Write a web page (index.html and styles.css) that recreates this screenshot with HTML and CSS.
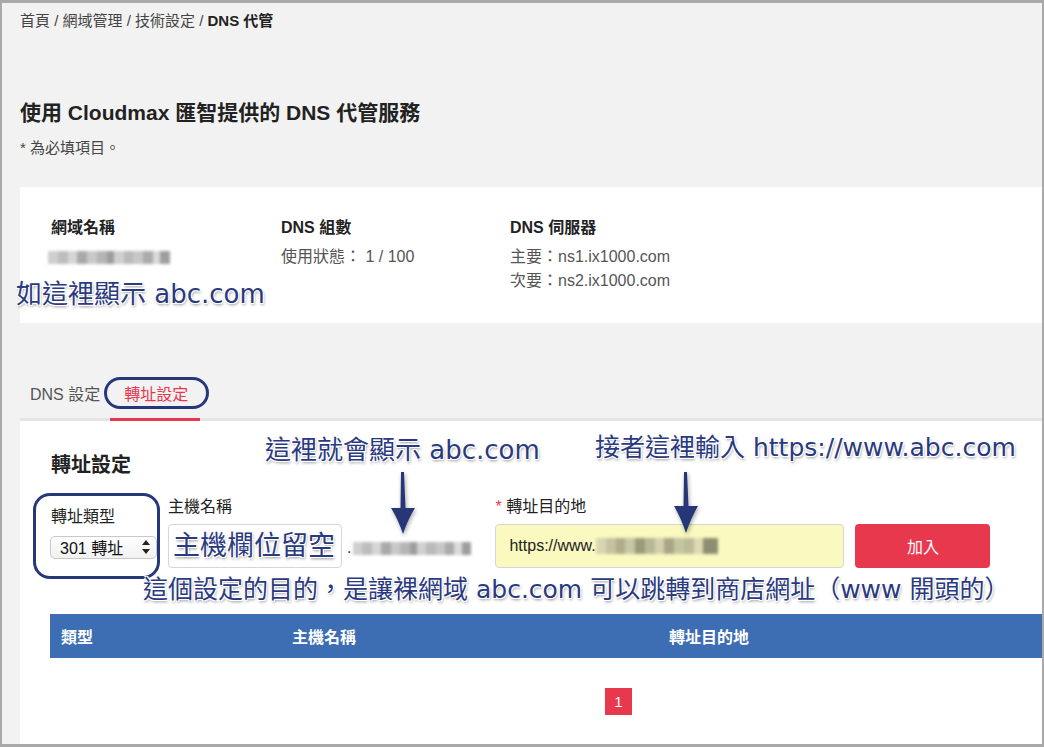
FILE: index.html
```html
<!DOCTYPE html>
<html lang="zh-Hant">
<head>
    <meta charset="UTF-8">
    <title>DNS 代管</title>
    <link rel="stylesheet" href="styles.css">
</head>
<body>
<div class="frame">
    <div class="page">
        <div class="breadcrumb">首頁 / 網域管理 / 技術設定 / <b>DNS 代管</b></div>
        <h1>使用 Cloudmax 匯智提供的 DNS 代管服務</h1>
        <p class="required">* 為必填項目。</p>

        <section class="panel info">
            <div class="info-col">
                <div class="info-label">網域名稱</div>
                <div class="info-value"><span class="blur blur-domain"></span></div>
            </div>
            <div class="info-col">
                <div class="info-label">DNS 組數</div>
                <div class="info-value">使用狀態： 1 / 100</div>
            </div>
            <div class="info-col">
                <div class="info-label">DNS 伺服器</div>
                <div class="info-value">主要：ns1.ix1000.com</div>
                <div class="info-value">次要：ns2.ix1000.com</div>
            </div>
            <div class="note note-domain">如這裡顯示 abc.com</div>
        </section>

        <nav class="tabs">
            <div class="tab">DNS 設定</div>
            <div class="tab active">轉址設定</div>
        </nav>

        <section class="panel redirect">
            <h2>轉址設定</h2>

            <div class="form-row">
                <div class="type-group">
                    <div class="field-label">轉址類型</div>
                    <div class="select">
                        <span>301 轉址</span>
                        <svg class="select-arrows" width="8" height="14" viewBox="0 0 8 14">
                            <path d="M4 0 L8 5 L0 5 Z M0 9 L8 9 L4 14 Z" fill="#222"/>
                        </svg>
                    </div>
                </div>
                <div class="host-group">
                    <div class="field-label">主機名稱</div>
                    <div class="host-line">
                        <div class="text-input host-input"><span class="note note-input">主機欄位留空</span></div>
                        <span class="suffix">.<span class="blur blur-host"></span></span>
                    </div>
                </div>
                <div class="dest-group">
                    <div class="field-label"><span class="star">*</span> 轉址目的地</div>
                    <div class="text-input dest-input">https://www.<span class="blur blur-dest"></span></div>
                </div>
                <button class="add-button">加入</button>
            </div>

            <div class="thead">
                <div>類型</div>
                <div>主機名稱</div>
                <div>轉址目的地</div>
            </div>

            <div class="pager"><span class="page-num">1</span></div>

            <!-- annotations over the form -->
            <div class="note note-host">這裡就會顯示 abc.com</div>
            <div class="note note-dest">接者這裡輸入 https://www.abc.com</div>
            <div class="note note-purpose">這個設定的目的，是讓裸網域 abc.com 可以跳轉到商店網址（www 開頭的）</div>
            <svg class="arrow arrow-host" width="26" height="63" viewBox="0 0 26 63">
                <path d="M11 0 L14 0 L15.5 36 L25 36 Q18 47 13 62 Q8 47 1 36 L10.5 36 Z" fill="#263778"/>
            </svg>
            <svg class="arrow arrow-dest" width="26" height="63" viewBox="0 0 26 63">
                <path d="M11 0 L14 0 L15.5 34 L25 34 Q18 46 13 61 Q8 46 1 34 L10.5 34 Z" fill="#263778"/>
            </svg>
        </section>
    </div>
</div>
</body>
</html>
```

FILE: styles.css
```css
body {
    margin: 0;
    font-family: "Liberation Sans", "Noto Sans CJK TC", sans-serif;
    color: #333;
}

.frame {
    width: 1044px;
    height: 747px;
    box-sizing: border-box;
    border-style: solid;
    border-color: #a9a9a9;
    border-width: 3px 2px 3px 2px;
    background: #f2f2f2;
    overflow: hidden;
}

.page {
    width: 1197px;
    padding: 8px 0 0 18px;
}

.breadcrumb {
    font-size: 15px;
    line-height: 20px;
    color: #444;
}
.breadcrumb b {
    color: #222;
}

h1 {
    margin: 69px 0 0;
    font-size: 21px;
    line-height: 26px;
    color: #222;
}

.required {
    margin: 12px 0 0;
    font-size: 15px;
    line-height: 20px;
    color: #444;
}

.panel {
    position: relative;
    background: #fff;
    padding-left: 31px;
    padding-right: 31px;
}

/* domain info */
.info {
    margin-top: 29px;
    height: 136px;
    box-sizing: border-box;
    padding-top: 31px;
    display: grid;
    grid-template-columns: 230px 229px auto;
}
.info-label {
    font-size: 16px;
    font-weight: bold;
    line-height: 20px;
    color: #222;
    margin-bottom: 7px;
}
.info-value {
    font-size: 16px;
    line-height: 24px;
    color: #555;
}

/* tabs */
.tabs {
    margin-top: 62px;
    display: flex;
    border-bottom: 3px solid #e4e4e4;
}
.tab {
    position: relative;
    font-size: 16px;
    line-height: 20px;
    color: #555;
    padding: 0 10px 13px 10px;
    border-bottom: 3px solid transparent;
    margin-bottom: -3px;
}
.tab.active {
    color: #e8374e;
    padding: 0 12px 13px 14px;
    border-bottom-color: #e8374e;
}
.tab.active::after {
    content: "";
    position: absolute;
    left: -6px;
    top: -8px;
    width: 99px;
    height: 26px;
    border: 3px solid #27387a;
    border-radius: 16px;
}

/* redirect form */
.redirect {
    padding-top: 30px;
    padding-bottom: 40px;
}
h2 {
    margin: 0;
    font-size: 20px;
    line-height: 28px;
    color: #222;
}

.form-row {
    margin-top: 18px;
    display: flex;
    align-items: center;
}
.field-label {
    font-size: 16px;
    line-height: 20px;
    color: #222;
}
.star {
    color: #e8374e;
}

.type-group {
    position: relative;
    width: 107px;
    margin-left: -1px;
    margin-right: 11px;
}
.type-group .field-label {
    padding-left: 1px;
    margin-bottom: 9px;
}
.type-group::before {
    content: "";
    position: absolute;
    top: -14px;
    bottom: -20px;
    left: -17px;
    right: -3px;
    border: 3px solid #27387a;
    border-radius: 17px;
}
.select {
    height: 23px;
    box-sizing: border-box;
    border: 1px solid #c9c9c9;
    border-radius: 5px;
    background: linear-gradient(#ffffff, #f1f1f1);
    display: flex;
    align-items: center;
    justify-content: space-between;
    padding: 0 6px 0 9px;
    font-size: 16px;
    color: #111;
}

.host-group .field-label,
.dest-group .field-label {
    margin-bottom: 7px;
}
.host-line {
    display: flex;
    align-items: center;
}
.text-input {
    height: 44px;
    box-sizing: border-box;
    border: 1px solid #d6d6d6;
    border-radius: 4px;
    display: flex;
    align-items: center;
}
.host-input {
    width: 174px;
    padding-left: 4px;
}
.suffix {
    display: flex;
    align-items: center;
    margin-left: 5px;
    font-size: 16px;
    color: #333;
    padding-top: 4px;
}

.dest-group {
    margin-left: 24px;
}
.dest-input {
    width: 349px;
    padding-left: 13px;
    background: #f9f9c0;
    font-size: 16px;
    color: #222;
}

.add-button {
    align-self: flex-end;
    margin-left: 11px;
    width: 135px;
    height: 44px;
    border: none;
    border-radius: 4px;
    background: #e8384e;
    color: #fff;
    font-family: "Liberation Sans", "Noto Sans CJK TC", sans-serif;
    font-size: 16px;
}

.thead {
    margin-top: 46px;
    margin-left: -1px;
    height: 44px;
    padding-left: 11px;
    background: #3d6db3;
    display: grid;
    grid-template-columns: 231px 377px auto;
    align-items: center;
    color: #fff;
    font-size: 16px;
    font-weight: bold;
}

.pager {
    margin-top: 30px;
    display: flex;
    justify-content: center;
}
.page-num {
    width: 27px;
    height: 27px;
    line-height: 27px;
    text-align: center;
    background: #e8384e;
    color: #fff;
    font-size: 15px;
}

/* blurred (hidden) domain names */
.blur {
    display: inline-block;
    height: 13px;
    filter: blur(1.6px);
    background: linear-gradient(90deg,
        #cfcfcf 0 8%, #bdbdbd 8% 16%, #d6d6d6 16% 24%, #a9a9a9 24% 32%,
        #c8c8c8 32% 40%, #b5b5b5 40% 48%, #9d9d9d 48% 54%, #d0d0d0 54% 62%,
        #bababa 62% 70%, #c7c7c7 70% 78%, #ababab 78% 86%, #dadada 86% 92%,
        #9e9e9e 92% 100%);
}
.blur-domain {
    width: 122px;
    margin-left: -3px;
    vertical-align: middle;
}
.blur-host {
    width: 118px;
    margin-left: 2px;
}
.blur-dest {
    width: 122px;
    height: 16px;
    background: linear-gradient(90deg,
        #d7d6b0 0 8%, #c4c3a0 8% 16%, #aeac8a 16% 24%, #c8c7a4 24% 32%,
        #9c9a7c 32% 40%, #b9b896 40% 48%, #d2d1ac 48% 56%, #a8a687 56% 64%,
        #c6c5a2 64% 72%, #bdbc99 72% 80%, #dcdbb4 80% 88%, #8f8d72 88% 100%);
}

/* annotations */
.note {
    font-family: "DejaVu Sans", "Noto Sans CJK TC", sans-serif;
    font-size: 25px;
    line-height: 32px;
    color: #2a3a80;
    white-space: nowrap;
    text-shadow: -1px -1px 0 #fff, 1px -1px 0 #fff, -1px 1px 0 #fff, 1px 1px 0 #fff,
        1px 2px 3px rgba(0, 0, 0, 0.45);
}
.note-domain {
    position: absolute;
    left: -4px;
    top: 91px;
    font-size: 26px;
}
.note-input {
    font-size: 27px;
    position: static;
}
.note-host {
    position: absolute;
    left: 245px;
    top: 13px;
    font-size: 26px;
}
.note-dest {
    position: absolute;
    left: 575px;
    top: 11px;
}
.note-purpose {
    position: absolute;
    left: 123px;
    top: 153px;
}
.arrow {
    position: absolute;
    top: 51px;
    filter: drop-shadow(1px 2px 2px rgba(0, 0, 0, 0.35));
}
.arrow-host {
    left: 370px;
}
.arrow-dest {
    left: 653px;
}
```
